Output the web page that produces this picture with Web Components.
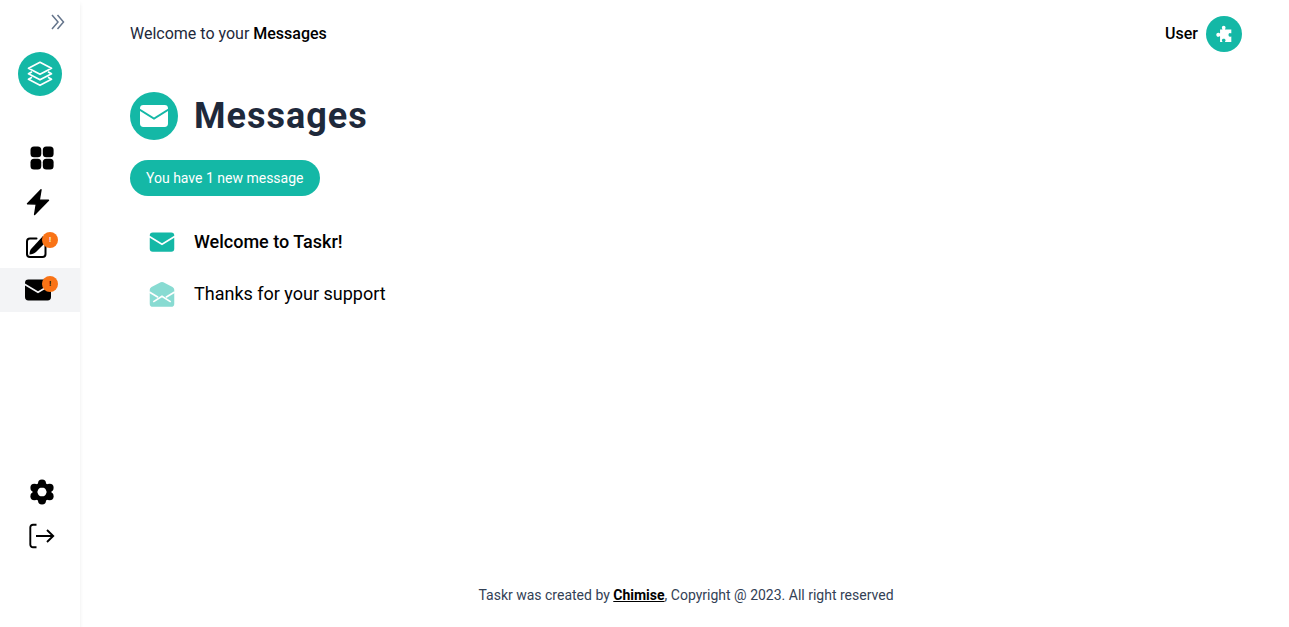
<!DOCTYPE html>
<html lang="en">
<head>
<meta charset="utf-8">
<meta name="viewport" content="width=device-width, initial-scale=1">
<title>Taskr - Messages</title>
<style>
  body { margin: 0; background: #fff; color: #000; font: 16px/24px Roboto, sans-serif; }
</style>
</head>
<body>
<taskr-app></taskr-app>

<script>
const icons = {
  expand: '<path d="M8 9l6 7-6 7M13.500 9l6 7-6 7" fill="none" stroke="#64748b" stroke-width="1.500"/>',
  logo: '<path d="M16 4.300l11.500 6-11.500 6-11.500-6zM8 13.800l-3.500 2 11.500 6 11.500-6-3.500-2M8 19.300l-3.500 2 11.500 6 11.500-6-3.500-2" fill="none" stroke="currentColor" stroke-width="1.700" stroke-linejoin="round"/>',
  grid: '<rect x="6.500" y="4.500" width="10.800" height="10.800" rx="3.500"/><rect x="18.800" y="4.500" width="10.800" height="10.800" rx="3.500"/><rect x="6.500" y="16.800" width="10.800" height="10.800" rx="3.500"/><rect x="18.800" y="16.800" width="10.800" height="10.800" rx="3.500"/>',
  bolt: '<path d="M17 3.800L3.500 17.700l8.800 .4L10.600 28.500 24.500 14.200l-9.200-.3z" stroke="currentColor" stroke-width="1.400" stroke-linejoin="round"/>',
  edit: '<path d="M12.500 8.400H6a3 3 0 0 0-3 3V24a3 3 0 0 0 3 3h12.500a3 3 0 0 0 3-3v-9" fill="none" stroke="currentColor" stroke-width="2" stroke-linecap="round"/><path d="M5.500 24.500c.1-2.500.4-4.200 2-6L19 6l4.500 4.500L12 22c-1.800 1.700-3.800 2.400-6.500 2.500z"/>',
  mail: '<path d="M1 8.800a3.400 3.400 0 0 1 3.400-3.400h19.200A3.400 3.400 0 0 1 27 8.800v.8l-13 7.700-13-7.700z"/><path d="M1 11.600l13 7.700 13-7.700V23a3.400 3.400 0 0 1-3.400 3.400H4.400A3.400 3.400 0 0 1 1 23z"/>',
  gear: '<path fill-rule="evenodd" d="M18 6.500a9.500 9.500 0 1 0 0 19 9.500 9.500 0 0 0 0-19zm0 4.900a4.600 4.600 0 1 1 0 9.200 4.600 4.600 0 0 1 0-9.200z"/><circle cx="18" cy="7.500" r="4"/><circle cx="18" cy="24.500" r="4"/><circle cx="10.400" cy="11.700" r="4"/><circle cx="25.600" cy="11.700" r="4"/><circle cx="10.400" cy="20.300" r="4"/><circle cx="25.600" cy="20.300" r="4"/>',
  logout: '<path d="M12.500 4.700H9a2.700 2.700 0 0 0-2.700 2.700v17.200A2.700 2.700 0 0 0 9 27.300h3.500M12 16h17M23 10l6.200 6-6.200 6" fill="none" stroke="currentColor" stroke-width="1.900"/>',
  envelope: '<path d="M2 8.400A3.400 3.400 0 0 1 5.400 5h21.200A3.400 3.400 0 0 1 30 8.400v.4l-14 8.700-14-8.700z"/><path d="M2 11.100l14 8.700 14-8.700v12.500a3.400 3.400 0 0 1-3.400 3.400H5.400A3.400 3.400 0 0 1 2 23.600z"/>',
  opened: '<path d="M14.500 2.700a3 3 0 0 1 3 0L28 8a3.600 3.600 0 0 1 2 3.200V27a3.600 3.600 0 0 1-3.600 3.600H5.600A3.600 3.600 0 0 1 2 27V11.200A3.600 3.600 0 0 1 4 8z"/><path d="M1.500 13.800l10 6M30.500 13.800l-10 6M6 25l10-6.500L26 25" fill="none" stroke="#fff" stroke-width="2"/>',
  puzzle: '<path d="M9 8h4.200c.2-1-1-1.500-1-3.100C12.200 3 13.500 1.500 15.500 1.500s3.300 1.500 3.300 3.400c0 1.600-1.200 2.100-1 3.100H29v6.500c-1 .3-1.500-.5-2.500-.5-1.500 0-2.500 1.500-2.500 3.500s1 3.500 2.500 3.500c1 0 1.500-.8 2.500-.5V30H17.800c-.2-1 1-1.400 1-2.900 0-1.800-1.300-2.800-3.300-2.800s-3.300 1-3.300 2.800c0 1.500 1.200 1.900 1 2.900H9V20.300c-1-.4-1.600.8-3.200.8C3.800 21.100 2.300 19.700 2.300 17.500s1.500-3.600 3.500-3.600c1.600 0 2.200 1.200 3.200.8z"/>'
};

const define = (name, markup) => {
  const template = document.createElement('template');
  template.innerHTML = markup;
  customElements.define(name, class extends HTMLElement {
    constructor() {
      super();
      this.attachShadow({ mode: 'open' }).append(template.content.cloneNode(true));
    }
  });
};

customElements.define('taskr-icon', class extends HTMLElement {
  connectedCallback() {
    if (this.shadowRoot) return;
    this.attachShadow({ mode: 'open' }).innerHTML = `
      <style>
        :host { display: block; flex: none; width: 32px; height: 32px; }
        svg { display: block; width: 100%; height: 100%; fill: currentColor; }
      </style>
      <svg viewBox="0 0 32 32" aria-hidden="true">${icons[this.getAttribute('name')]}</svg>`;
  }
});

define('icon-disc', `
  <style>
    :host { display: grid; place-items: center; flex: none; width: 48px; height: 48px; border-radius: 50%; background: #14b8a6; color: #fff; }
  </style>
  <slot></slot>`);

customElements.define('nav-item', class extends HTMLElement {
  connectedCallback() {
    if (this.shadowRoot) return;
    const badge = this.getAttribute('badge');
    this.attachShadow({ mode: 'open' }).innerHTML = `
      <style>
        :host { display: block; }
        :host([active]) { background: #f3f4f6; }
        a { position: relative; display: flex; justify-content: center; align-items: center; height: 44px; color: #000; }
        .badge { position: absolute; top: 8px; right: 22px; width: 16px; height: 16px; border-radius: 50%; background: #f97316; font-size: 8px; line-height: 16px; font-weight: 500; text-align: center; }
        :host(:not([active])) .badge { color: #fff; }
      </style>
      <a href="#" aria-label="${this.getAttribute('label')}">
        <taskr-icon name="${this.getAttribute('icon')}"></taskr-icon>
        ${badge ? `<span class="badge">${badge}</span>` : ''}
      </a>`;
  }
});

define('side-bar', `
  <style>
    :host { display: flex; flex-direction: column; box-sizing: border-box; width: 80px; padding-bottom: 69px; background: #fff; box-shadow: 0 4px 4px rgba(0, 0, 0, .08); }
    button { align-self: flex-end; margin: 6px 4px 14px 0; padding: 0; border: 0; background: none; }
    icon-disc { align-self: center; width: 44px; height: 44px; margin-bottom: 40px; }
    nav { display: flex; flex-direction: column; flex: 1; }
    .gap { flex: 1; }
  </style>
  <button type="button" aria-label="Expand menu"><taskr-icon name="expand"></taskr-icon></button>
  <icon-disc><taskr-icon name="logo"></taskr-icon></icon-disc>
  <nav>
    <nav-item icon="grid" label="Dashboard"></nav-item>
    <nav-item icon="bolt" label="Activity"></nav-item>
    <nav-item icon="edit" label="Tasks" badge="!"></nav-item>
    <nav-item icon="mail" label="Messages" badge="!" active></nav-item>
    <span class="gap"></span>
    <nav-item icon="gear" label="Settings"></nav-item>
    <nav-item icon="logout" label="Log out"></nav-item>
  </nav>`);

define('top-bar', `
  <style>
    :host { display: flex; justify-content: space-between; align-items: center; color: #1e293b; }
    ::slotted(b), b { color: #000; font-weight: 500; }
    .user { display: flex; align-items: center; gap: 8px; }
    icon-disc { width: 36px; height: 36px; }
    taskr-icon { width: 18px; height: 18px; }
  </style>
  <span><slot></slot></span>
  <span class="user"><b>User</b><icon-disc><taskr-icon name="puzzle"></taskr-icon></icon-disc></span>`);

define('page-title', `
  <style>
    :host { display: flex; align-items: center; gap: 16px; }
    h1 { margin: 0; color: #1e293b; font-size: 36px; line-height: 40px; font-weight: 700; letter-spacing: 1px; }
  </style>
  <icon-disc><taskr-icon name="envelope"></taskr-icon></icon-disc>
  <h1><slot></slot></h1>`);

define('status-pill', `
  <style>
    :host { display: block; width: fit-content; padding: 8px 16px; border-radius: 18px; background: #14b8a6; color: #fff; font-size: 14px; line-height: 20px; }
  </style>
  <slot></slot>`);

customElements.define('message-row', class extends HTMLElement {
  connectedCallback() {
    if (this.shadowRoot) return;
    this.attachShadow({ mode: 'open' }).innerHTML = `
      <style>
        :host { display: flex; align-items: center; gap: 18px; height: 52px; padding-left: 18px; font-size: 18px; line-height: 28px; }
        :host([unread]) { font-weight: 500; }
        taskr-icon { width: 28px; height: 28px; color: #14b8a6; }
        :host(:not([unread])) taskr-icon { opacity: .5; }
      </style>
      <taskr-icon name="${this.hasAttribute('unread') ? 'envelope' : 'opened'}"></taskr-icon>
      <slot></slot>`;
  }
});

define('page-footer', `
  <style>
    :host { display: block; color: #334155; font-size: 14px; line-height: 20px; text-align: center; }
    a { color: #000; font-weight: 700; }
  </style>
  Taskr was created by <a href="#">Chimise</a>, Copyright @ 2023. All right reserved`);

define('taskr-app', `
  <style>
    :host { display: grid; grid-template-columns: 80px 1fr; column-gap: 2px; min-height: 100vh; }
    main { display: flex; flex-direction: column; box-sizing: border-box; padding: 16px 47px 22px 48px; }
    page-title { margin-top: 40px; }
    status-pill { margin-top: 20px; }
    section { flex: 1; margin-top: 20px; }
  </style>
  <side-bar></side-bar>
  <main>
    <top-bar>Welcome to your <b>Messages</b></top-bar>
    <page-title>Messages</page-title>
    <status-pill>You have 1 new message</status-pill>
    <section>
      <message-row unread>Welcome to Taskr!</message-row>
      <message-row>Thanks for your support</message-row>
    </section>
    <page-footer></page-footer>
  </main>`);
</script>
</body>
</html>
